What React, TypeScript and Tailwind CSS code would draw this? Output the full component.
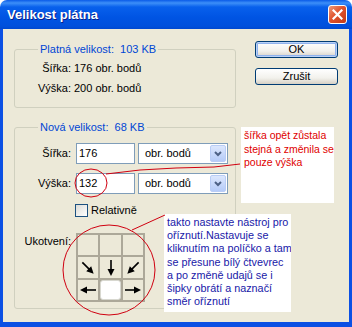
import React from 'react';

const font = { fontFamily: '"Liberation Sans", Arial, sans-serif' };

const Arrow = ({ dir }: { dir: 'dr' | 'd' | 'dl' | 'l' | 'r' }) => {
  const rot = { d: 0, dr: -45, dl: 45, l: 90, r: -90 }[dir];
  return (
    <svg width="20" height="20" viewBox="0 0 20 20">
      <g transform={`rotate(${rot} 10 10)`}>
        <line x1="10" y1="2" x2="10" y2="13" stroke="#000" strokeWidth="1.6" />
        <polygon points="6.5,11 13.5,11 10,18" fill="#000" />
      </g>
    </svg>
  );
};

const Select = () => (
  <div className="w-[90px] h-[21px] border border-[#7F9DB9] bg-white flex items-center justify-between pl-[6px] pr-[1px]">
    <span>obr. bodů</span>
    <div className="w-[16px] h-[17px] rounded-[2px] border border-[#B9CDF6] bg-[linear-gradient(to_bottom,#DCE7FD,#B5CBF8)] flex items-center justify-center">
      <svg width="8" height="6" viewBox="0 0 8 6">
        <polyline points="1,1 4,4 7,1" fill="none" stroke="#4D6185" strokeWidth="2" />
      </svg>
    </div>
  </div>
);

const XPButton = ({ label, def }: { label: string; def?: boolean }) => (
  <button
    className={`w-[83px] h-[17px] rounded-[3px] border border-[#003C74] bg-[linear-gradient(to_bottom,#FFFFFF,#F2F1EC_60%,#D6D0C5)] flex items-center justify-center text-black ${
      def ? 'shadow-[inset_0_0_0_1px_#B9D1F6,inset_0_0_0_2px_#8FB2EE]' : ''
    }`}
  >
    {label}
  </button>
);

export default function App() {
  return (
    <div className="relative w-[352px] h-[327px] flex flex-col text-[11px] leading-[13px] text-black bg-white" style={font}>
      {/* title bar */}
      <div className="h-[29px] rounded-t-[7px] bg-[linear-gradient(to_bottom,#0A5BE8_0px,#3D8FF8_3px,#0860EC_7px,#0054E3_60%,#0050DC_90%,#0048D0_100%)] flex items-center justify-between pl-[7px] pr-[5px]">
        <span className="text-white font-bold text-[13px] leading-[16px] mt-[1px] [text-shadow:1px_1px_0_#0A1E8A]">Velikost plátna</span>
        <div className="w-[19px] h-[19px] mb-[1px] rounded-[3px] border border-white bg-[linear-gradient(135deg,#EE9A7A,#E0532E_45%,#C13A15)] flex items-center justify-center">
          <svg width="11" height="11" viewBox="0 0 11 11">
            <path d="M1.5 1.5 L9.5 9.5 M9.5 1.5 L1.5 9.5" stroke="#fff" strokeWidth="2.2" strokeLinecap="square" />
          </svg>
        </div>
      </div>

      {/* body */}
      <div className="flex-1 flex bg-[#ECE9D8] border-x-[3px] border-b-[5px] border-[#0B50E4]">
        <div className="ml-[11px] w-[222px] flex flex-col">
          <fieldset className="mt-[14px] border border-[#D0D0BF] rounded-[3px] pl-[8px] pt-[6px] pb-[12px]">
            <legend className="ml-[15px] px-[2px] text-[#0046D5] leading-[13px]">Platná velikost:&nbsp; 103 KB</legend>
            <div className="grid grid-cols-[48px_1fr] gap-x-[3px] gap-y-[7px]">
              <span className="text-right">Šířka:</span>
              <span>176 obr. bodů</span>
              <span className="text-right">Výška:</span>
              <span>200 obr. bodů</span>
            </div>
          </fieldset>

          <fieldset className="mt-[13px] border border-[#D0D0BF] rounded-[3px] pl-[8px] pt-[9px] pb-[6px]">
            <legend className="ml-[15px] px-[2px] text-[#0046D5] leading-[13px]">Nová velikost:&nbsp; 68 KB</legend>
            <div className="flex items-center">
              <span className="w-[48px] text-right">Šířka:</span>
              <div className="ml-[5px] w-[59px] h-[21px] border border-[#7F9DB9] bg-white flex items-center pl-[2px]">176</div>
              <div className="ml-[3px]"><Select /></div>
            </div>
            <div className="mt-[9px] flex items-center">
              <span className="w-[48px] text-right">Výška:</span>
              <div className="ml-[5px] w-[59px] h-[21px] border border-[#7F9DB9] bg-white flex items-center pl-[2px]">132</div>
              <div className="ml-[3px]"><Select /></div>
            </div>
            <div className="mt-[10px] ml-[52px] flex items-center">
              <div className="w-[13px] h-[13px] border border-[#1C5180] bg-[linear-gradient(135deg,#DCDCD7,#FFFFFF)]" />
              <span className="ml-[3px]">Relativně</span>
            </div>
            <div className="mt-[16px] flex items-start">
              <span className="w-[48px] text-right mt-[2px]">Ukotvení:</span>
              <div className="ml-[5px] grid grid-cols-[20px_21px_20px] grid-rows-[20px_21px_20px] gap-[2px] p-[2px] bg-[#ACA899]">
                <div className="bg-[#ECE9D8]" />
                <div className="bg-[#ECE9D8]" />
                <div className="bg-[#ECE9D8]" />
                <div className="bg-[#ECE9D8] flex items-center justify-center"><Arrow dir="dr" /></div>
                <div className="bg-[#ECE9D8] flex items-center justify-center"><Arrow dir="d" /></div>
                <div className="bg-[#ECE9D8] flex items-center justify-center"><Arrow dir="dl" /></div>
                <div className="bg-[#ECE9D8] flex items-center justify-center"><Arrow dir="l" /></div>
                <div className="bg-white rounded-[3px] border border-[#D8D8D0]" />
                <div className="bg-[#ECE9D8] flex items-center justify-center"><Arrow dir="r" /></div>
              </div>
            </div>
          </fieldset>
        </div>

        <div className="ml-[19px] mt-[12px] flex flex-col gap-[10px]">
          <XPButton label="OK" def />
          <XPButton label="Zrušit" />
        </div>
      </div>

      {/* annotations */}
      <div className="absolute left-[241px] top-[127px] w-[93px] h-[76px] bg-white pl-[3px] pt-[2px] text-[#E00000] text-[10.5px] leading-[13.5px] whitespace-nowrap overflow-hidden">
        šířka opět zůstala<br />stejná a změnila se<br />pouze výška
      </div>
      <div className="absolute left-[164px] top-[214px] w-[127px] h-[98px] bg-white pl-[3px] pt-[2px] text-[#1818A8] text-[10.8px] leading-[13.2px] whitespace-nowrap overflow-hidden">
        takto nastavte nástroj pro<br />oříznutí.Nastavuje se<br />kliknutím na políčko a tam<br />se přesune bílý čtvevrec<br />a po změně udajů se i<br />šipky obrátí a naznačí<br />směr oříznutí
      </div>
      <svg className="absolute left-0 top-0 pointer-events-none" width="352" height="327">
        <ellipse cx="91" cy="183" rx="16" ry="14" fill="none" stroke="#D00010" strokeWidth="1" />
        <polyline points="106,174 140,170 176,168 214,167 240,164" fill="none" stroke="#D00010" strokeWidth="1" />
        <ellipse cx="109" cy="270" rx="46" ry="45" fill="none" stroke="#D00010" strokeWidth="1" />
        <line x1="132" y1="230" x2="165" y2="215" stroke="#D00010" strokeWidth="1" />
      </svg>
    </div>
  );
}
